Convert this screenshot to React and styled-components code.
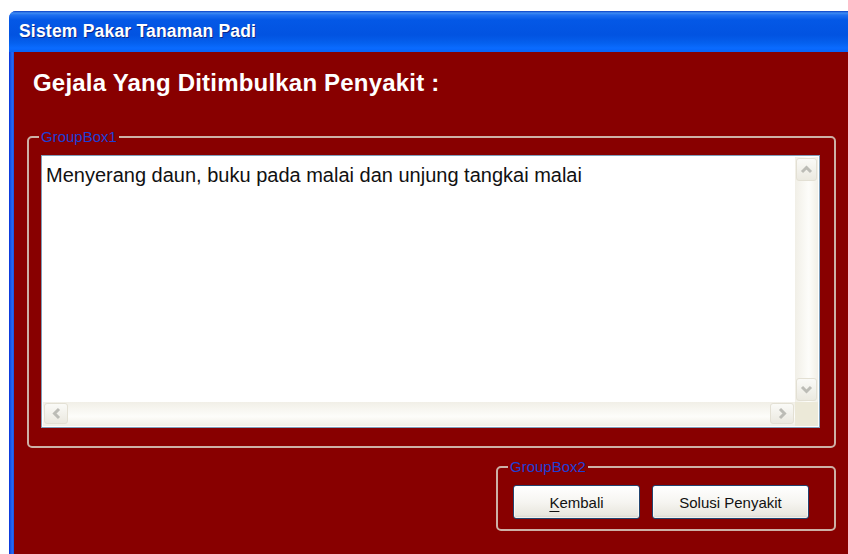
import styled, { createGlobalStyle } from 'styled-components'

const GlobalStyle = createGlobalStyle`
  html, body {
    margin: 0;
    padding: 0;
    background: #ffffff;
    overflow: hidden;
  }
  body {
    width: 848px;
    height: 554px;
    font-family: "Liberation Sans", Arial, sans-serif;
  }
`

const Window = styled.div`
  margin: 11px 0 0 9px;
  width: 860px;
  height: 543px;
  display: flex;
  flex-direction: column;
  border-radius: 7px 0 0 0;
  overflow: hidden;
  background: #0a4fe0;
`

const TitleBar = styled.div`
  height: 41px;
  flex: none;
  display: flex;
  align-items: center;
  padding: 0 0 0 10px;
  background: linear-gradient(
    to bottom,
    #0a3fc4 0px,
    #3f8cf3 2px,
    #1f6ff0 4px,
    #0458e6 9px,
    #0253e1 24px,
    #0560ee 32px,
    #0a6bff 37px,
    #0863f8 41px
  );
  color: #ffffff;
  font-size: 17.5px;
  font-weight: bold;
  letter-spacing: 0.2px;
  text-shadow: 1px 1px 0 #0b2a8c;
`

const Frame = styled.div`
  flex: 1;
  display: flex;
  padding-left: 5px;
  background: linear-gradient(to right, #0831d9 0, #1c5de8 2px, #2a6cf2 4px, #0a48dc 5px);
`

const Body = styled.div`
  flex: 1;
  background: #880000;
  padding: 16px 0 0 13px;
  display: flex;
  flex-direction: column;
`

const Heading = styled.h1`
  margin: 0;
  padding-left: 6px;
  height: 30px;
  line-height: 30px;
  color: #ffffff;
  font-size: 24px;
  font-weight: bold;
  letter-spacing: 0.2px;
`

const GroupBox = styled.div`
  position: relative;
  box-sizing: border-box;
  width: ${p => p.$width}px;
  height: ${p => p.$height}px;
  margin-top: ${p => p.$top}px;
  border: 2px solid #cdb0a6;
  border-radius: 5px;
  padding: ${p => p.$padding};
`

const GroupLabel = styled.span`
  position: absolute;
  top: -10px;
  left: 10px;
  padding: 0 2px;
  background: #880000;
  color: #1c3fd6;
  font-size: 15px;
  line-height: 17px;
`

const Footer = styled.div`
  width: 809px;
  display: flex;
  justify-content: flex-end;
`

const Memo = styled.div`
  box-sizing: border-box;
  width: 779px;
  height: 273px;
  border: 1px solid #7f9db9;
  background: #ffffff;
  padding: 1px;
  display: grid;
  grid-template-columns: 1fr 23px;
  grid-template-rows: 1fr 24px;
`

const MemoText = styled.div`
  padding: 7px 0 0 3px;
  color: #111111;
  font-size: 20px;
  line-height: 22px;
  white-space: nowrap;
  overflow: hidden;
`

const ScrollTrack = styled.div`
  display: flex;
  flex-direction: ${p => (p.$vertical ? 'column' : 'row')};
  justify-content: space-between;
  background: ${p =>
    p.$vertical
      ? 'linear-gradient(to right, #f1efe7, #fdfdfa 60%, #f1efe6)'
      : 'linear-gradient(to bottom, #f1efe7, #fdfdfa 60%, #f1efe6)'};
`

const ScrollButton = styled.div`
  box-sizing: border-box;
  width: ${p => (p.$vertical ? '21px' : '24px')};
  height: ${p => (p.$vertical ? '23px' : '21px')};
  margin: ${p => (p.$vertical ? '1px 0 1px 1px' : '1px 1px 2px')};
  border: 1px solid #e3e0d4;
  border-radius: 3px;
  background: linear-gradient(to bottom, #fafaf7, #ebe9e0);
  display: flex;
  align-items: center;
  justify-content: center;
`

const Corner = styled.div`
  background: #ece9d8;
`

const ButtonRow = styled.div`
  display: flex;
  gap: 12px;
`

const Button = styled.button`
  box-sizing: border-box;
  width: ${p => p.$width}px;
  height: 34px;
  border: 1px solid #22446f;
  border-radius: 3px;
  background: linear-gradient(to bottom, #ffffff 0%, #f6f5f1 50%, #e9e7df 90%, #d8d5cb 100%);
  box-shadow: inset 0 0 0 1px rgba(255, 255, 255, 0.6);
  color: #111111;
  font-family: "Liberation Sans", Arial, sans-serif;
  font-size: 15px;
  padding: 0;
  u {
    text-decoration-thickness: 1px;
    text-underline-offset: 3px;
  }
`

function Chevron({ dir }) {
  const points = {
    up: '3,10 7.5,5.5 12,10',
    down: '3,5 7.5,9.5 12,5',
    left: '10,3 5.5,7.5 10,12',
    right: '5,3 9.5,7.5 5,12',
  }[dir]
  return (
    <svg width="15" height="15" viewBox="0 0 15 15">
      <polyline points={points} fill="none" stroke="#bcbcb6" strokeWidth="3" />
    </svg>
  )
}

export default function App() {
  return (
    <>
      <GlobalStyle />
      <Window>
        <TitleBar>Sistem Pakar Tanaman Padi</TitleBar>
        <Frame>
          <Body>
            <Heading>Gejala Yang Ditimbulkan Penyakit :</Heading>
            <GroupBox $width={809} $height={312} $top={38} $padding="17px 0 0 12px">
              <GroupLabel>GroupBox1</GroupLabel>
              <Memo>
                <MemoText>Menyerang daun, buku pada malai dan unjung tangkai malai</MemoText>
                <ScrollTrack $vertical>
                  <ScrollButton $vertical><Chevron dir="up" /></ScrollButton>
                  <ScrollButton $vertical><Chevron dir="down" /></ScrollButton>
                </ScrollTrack>
                <ScrollTrack>
                  <ScrollButton><Chevron dir="left" /></ScrollButton>
                  <ScrollButton><Chevron dir="right" /></ScrollButton>
                </ScrollTrack>
                <Corner />
              </Memo>
            </GroupBox>
            <Footer>
              <GroupBox $width={340} $height={65} $top={18} $padding="17px 0 0 15px">
                <GroupLabel>GroupBox2</GroupLabel>
                <ButtonRow>
                  <Button $width={127}><u>K</u>embali</Button>
                  <Button $width={157}>Solusi Penyakit</Button>
                </ButtonRow>
              </GroupBox>
            </Footer>
          </Body>
        </Frame>
      </Window>
    </>
  )
}
